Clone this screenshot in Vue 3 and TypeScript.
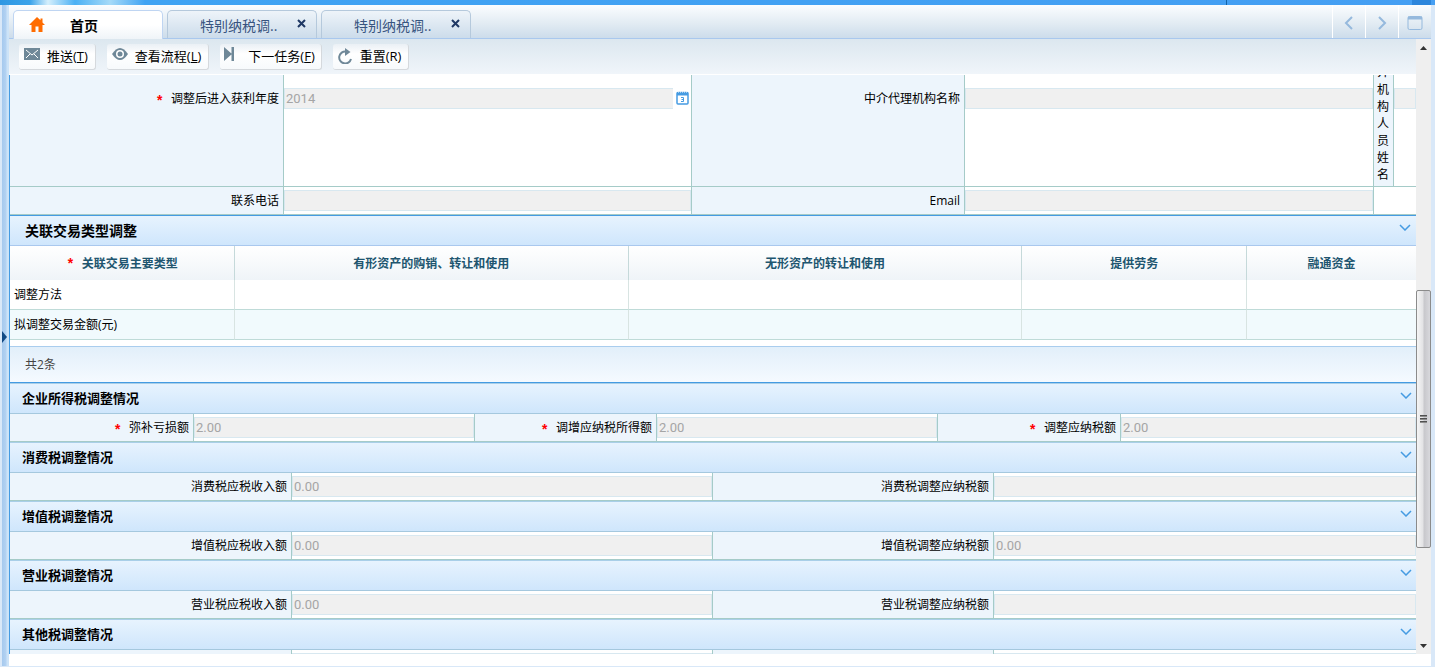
<script setup lang="ts">
interface Field {
  id: string
  label: string
  value: string
  required?: boolean
}
interface Section {
  title: string
  columns: string
  fields: Field[]
}

const tabs: string[] = ['特别纳税调..', '特别纳税调..']

const gridColumns: string[] = ['有形资产的购销、转让和使用', '无形资产的转让和使用', '提供劳务', '融通资金']
const gridRows: string[] = ['调整方法', '拟调整交易金额(元)']

const pair = (id: string, name: string, income: string, tax: string): Section => ({
  title: `${name}调整情况`,
  columns: 'two',
  fields: [
    { id: `${id}-income`, label: `${name}应税收入额`, value: income },
    { id: `${id}-tax`, label: `${name}调整应纳税额`, value: tax },
  ],
})

const sections: Section[] = [
  {
    title: '企业所得税调整情况',
    columns: 'three',
    fields: [
      { id: 'loss', label: '弥补亏损额', value: '2.00', required: true },
      { id: 'taxable', label: '调增应纳税所得额', value: '2.00', required: true },
      { id: 'payable', label: '调整应纳税额', value: '2.00', required: true },
    ],
  },
  pair('consumption', '消费税', '0.00', ''),
  pair('vat', '增值税', '0.00', '0.00'),
  pair('business', '营业税', '0.00', ''),
  pair('other', '其他税', '0.00', ''),
]
</script>

<template>
  <div class="app">
    <div class="banner"><span class="banner-mark"></span><span class="banner-end"></span></div>
    <div class="frame">
      <div class="splitter"><button class="expand" aria-label="展开"></button></div>
      <main class="main">
        <nav class="tabs">
          <button class="tab active">
            <svg class="home" viewBox="0 0 16 15"><path d="M8 0 0 8h2.500v7h4V9.500h3V15h4V8H16l-2.500-2.600V1.500h-2v1.800z" /></svg>
            <span>首页</span>
          </button>
          <div v-for="(t, i) in tabs" :key="i" class="tab">
            <button class="tab-name">{{ t }}</button>
            <button class="close" aria-label="关闭">
              <svg viewBox="0 0 9 9"><path d="M1 1l7 7M8 1L1 8" /></svg>
            </button>
          </div>
          <div class="tools">
            <button aria-label="向左"><svg viewBox="0 0 16 16"><path d="M11 2 5 8l6 6" /></svg></button>
            <button aria-label="向右"><svg viewBox="0 0 16 16"><path d="M5 2l6 6-6 6" /></svg></button>
            <button aria-label="窗口"><svg class="window" viewBox="0 0 16 16"><rect x="1" y="1.500" width="14" height="13" rx="1.500" /><path d="M1 3h14" class="thick" /></svg></button>
          </div>
        </nav>

        <div class="body">
          <div class="content">
            <div class="toolbar">
              <button class="action">
                <svg viewBox="0 0 16 16"><path class="fill" d="M0 2h16v12H0z" /><path class="light" d="M2 4l6 5 6-5M2 12l4-4M14 12l-4-4" /></svg>
                <span>推送(<u>T</u>)</span>
              </button>
              <button class="action">
                <svg viewBox="0 0 16 16"><path class="fill" d="M0 8q8-12 16 0-8 12-16 0z" /><circle class="white" cx="8" cy="8" r="4" /><circle class="fill" cx="8" cy="8" r="2.500" /></svg>
                <span>查看流程(<u>L</u>)</span>
              </button>
              <button class="action wide">
                <svg viewBox="0 0 16 16"><path class="fill" d="M1 1l8 7-8 7zM8.500 1H11v14H8.500z" /></svg>
                <span>下一任务(<u>F</u>)</span>
              </button>
              <button class="action reset">
                <svg viewBox="0 0 16 16"><path class="stroke" d="M14 11A6 6 0 1 1 9 3.500" /><path class="fill" d="M8 0l5.500 4L8 8z" /></svg>
                <span>重置(R)</span>
              </button>
            </div>

            <form class="form" @submit.prevent>
              <div class="row agency tall">
                <label class="label" for="year"><i>*</i>调整后进入获利年度</label>
                <div class="cell dated">
                  <input id="year" value="2014" disabled />
                  <button type="button" class="calendar" aria-label="选择日期">
                    <svg viewBox="0 0 13 14"><rect x="1" y="1.500" width="11" height="11.500" rx="1" fill="#fff" stroke="#459be2" stroke-width="1.500" /><path d="M1 1h11v3.500H1z" fill="#459be2" /><path d="M2 1h1M4 1h1M6 1h1M8 1h1M10 1h1" stroke="#fff" /><path d="M5 6.500h2.500v4H5M5.500 8.500h2" fill="none" stroke="#459be2" /></svg>
                  </button>
                </div>
                <label class="label" for="agency">中介代理机构名称</label>
                <div class="cell"><input id="agency" disabled /></div>
                <label class="label vertical" for="person">中介机构人员姓名</label>
                <div class="cell last"><input id="person" disabled /></div>
              </div>
              <div class="row agency contact">
                <label class="label" for="phone">联系电话</label>
                <div class="cell"><input id="phone" disabled /></div>
                <label class="label" for="email">Email</label>
                <div class="cell"><input id="email" disabled /></div>
              </div>

              <section class="panel">
                <h2 class="heading large">
                  <span>关联交易类型调整</span>
                  <button type="button" class="fold" aria-label="收起"><svg viewBox="0 0 12 7"><path d="M1 1l5 5 5-5" /></svg></button>
                </h2>
                <table class="grid">
                  <colgroup><col class="c1" /><col class="c2" /><col class="c2" /><col class="c1" /><col class="c3" /></colgroup>
                  <thead>
                    <tr>
                      <th><i>*</i>关联交易主要类型</th>
                      <th v-for="c in gridColumns" :key="c">{{ c }}</th>
                    </tr>
                  </thead>
                  <tbody>
                    <tr v-for="r in gridRows" :key="r">
                      <td>{{ r }}</td>
                      <td v-for="c in gridColumns" :key="c"></td>
                    </tr>
                  </tbody>
                </table>
                <div class="total">共2条</div>
              </section>

              <section v-for="s in sections" :key="s.title" class="section">
                <h2 class="heading">
                  <span>{{ s.title }}</span>
                  <button type="button" class="fold" aria-label="收起"><svg viewBox="0 0 12 7"><path d="M1 1l5 5 5-5" /></svg></button>
                </h2>
                <div class="row" :class="s.columns">
                  <template v-for="f in s.fields" :key="f.id">
                    <label class="label" :for="f.id"><i v-if="f.required">*</i>{{ f.label }}</label>
                    <div class="cell"><input :id="f.id" :value="f.value" disabled /></div>
                  </template>
                </div>
              </section>
            </form>
          </div>
          <div class="scrollbar">
            <button class="arrow" aria-label="向上滚动"><svg viewBox="0 0 7 4"><path d="M0 4l3.500-4L7 4z" /></svg></button>
            <div class="track"><div class="before"></div><div class="thumb"><span></span><span></span><span></span></div><div class="after"></div></div>
            <button class="arrow" aria-label="向下滚动"><svg viewBox="0 0 7 4"><path d="M0 0l3.500 4L7 0z" /></svg></button>
          </div>
        </div>
      </main>
    </div>
  </div>
</template>

<style>
body {
  margin: 0;
  overflow: hidden;
}
</style>

<style scoped>
* {
  box-sizing: border-box;
}
.app {
  height: 100vh;
  display: flex;
  flex-direction: column;
  background: #d9e8f8;
  font-family: "Open Sans", "Noto Sans CJK SC", sans-serif;
  font-size: 12px;
  color: #000;
}
button {
  border: 0;
  padding: 0;
  background: none;
  font: inherit;
  color: inherit;
}
svg {
  display: block;
}
.banner {
  height: 5px;
  display: flex;
  justify-content: flex-end;
  background: linear-gradient(90deg, #2e97e2 0, #3ba3ea 30px, #d5effc 48px, #4ab0f4 75px, #a5daf8 110px, #3fa3f3 145px, #459ff3 100%);
}
.banner-mark {
  width: 209px;
  border-left: 1px solid #1463a8;
}
.banner-end {
  width: 19px;
  margin-right: 4px;
  margin-left: -23px;
  background: #2d86dc;
}
.frame {
  flex: 1;
  min-height: 0;
  display: flex;
  padding: 0 4px 1px 2px;
}
.splitter {
  width: 7px;
  display: flex;
  align-items: center;
  background: linear-gradient(90deg, #a5c9ee 0, #b3d2f2 4px, #cce3f8 5px, #cce3f8 100%);
}
.expand {
  margin-top: 2px;
  border-left: 5px solid #124a85;
  border-top: 6px solid transparent;
  border-bottom: 6px solid transparent;
}
.main {
  flex: 1;
  min-width: 0;
  display: flex;
  flex-direction: column;
  background: #fff;
  padding-bottom: 12px;
}
.tabs {
  height: 34px;
  display: flex;
  gap: 4px;
  padding-left: 4px;
  border-bottom: 1px solid #a9c8ee;
  background: linear-gradient(#fbfdff, #e0eaf2 60%, #ccdceb);
}
.tab {
  width: 150px;
  margin-top: 5px;
  display: flex;
  align-items: center;
  border: 1px solid #b5c9dc;
  border-bottom: 0;
  border-radius: 5px 5px 0 0;
  background: linear-gradient(#eef4f9, #ccdceb);
  color: #38547f;
  font-size: 14px;
}
.tab.active {
  background: linear-gradient(#fff 50%, #eff4f8);
  border-color: #bfd5f2;
  margin-bottom: -1px;
  padding-left: 15px;
  gap: 25px;
  color: #000;
  font-weight: 700;
}
.home {
  width: 16px;
  height: 15px;
  margin-bottom: 2px;
  fill: #ff6c00;
}
.active span {
  margin-bottom: 1px;
}
.tab-name {
  flex: 1;
  padding-left: 32px;
  text-align: left;
}
.close {
  padding: 0 10px 2px 0;
}
.close svg {
  width: 9px;
  height: 9px;
  stroke: #1f3864;
  stroke-width: 2;
}
.tools {
  margin-left: auto;
  display: flex;
}
.tools button {
  width: 33px;
  display: flex;
  align-items: center;
  justify-content: center;
  border-left: 1px solid #fff;
}
.tools svg {
  width: 16px;
  height: 16px;
  margin-top: 3px;
  fill: none;
  stroke: #95b9dd;
  stroke-width: 2;
}
.tools .window {
  stroke-width: 1;
}
.tools .thick {
  stroke-width: 3;
}
.body {
  flex: 1;
  min-height: 0;
  display: flex;
}
.content {
  flex: 1;
  min-width: 0;
  display: flex;
  flex-direction: column;
}
.toolbar {
  height: 36px;
  flex: none;
  display: flex;
  align-items: flex-start;
  gap: 11px;
  padding: 5px 0 0 10px;
  border-bottom: 1px solid #fff;
  background: linear-gradient(#dce7ef, #f0f5fa);
}
.action {
  height: 26px;
  display: flex;
  align-items: center;
  gap: 7px;
  padding: 0 7px 3px 5px;
  border-right: 1px solid #d5d9dd;
  border-bottom: 1px solid #d5d9dd;
  border-radius: 3px;
  background: linear-gradient(#eaf0f5, #fff 40%, #f7fafc);
  font-size: 13px;
  white-space: nowrap;
}
.action svg {
  width: 16px;
  height: 16px;
  margin-bottom: 2px;
}
.action.wide {
  gap: 9px;
  padding-left: 3px;
  padding-right: 6px;
}
.action.reset svg {
  margin: 2px 0 0;
}
.action.reset {
  padding-left: 4px;
}
.fill {
  fill: #6f8898;
}
.white {
  fill: #fff;
}
.light {
  fill: none;
  stroke: #fff;
}
.stroke {
  fill: none;
  stroke: #6f8898;
  stroke-width: 2;
}
.form {
  flex: 1;
  min-height: 0;
  overflow: hidden;
  border-left: 1px solid #459be2;
}
.row {
  display: grid;
  border-bottom: 1px solid #a5cbc8;
}
.agency {
  grid-template-columns: 274fr 408fr 273fr 409fr 20px 22px;
}
.two {
  grid-template-columns: 282fr 421fr 281fr 422fr;
}
.three {
  grid-template-columns: 184fr 281fr 182fr 281fr 183fr 295fr;
}
.label {
  padding: 3px 4px 3px 0;
  border-right: 1px solid #a5cbc8;
  background: #edf5fc;
  line-height: 21px;
  text-align: right;
  white-space: nowrap;
}
i {
  display: inline-block;
  height: 12px;
  margin-right: 7px;
  color: #f00;
  font: 700 14px "Liberation Mono", monospace;
  line-height: 22px;
  vertical-align: top;
}
.label i {
  margin-top: 3px;
}
.cell {
  min-width: 0;
  padding: 3px 0;
  border-right: 1px solid #a5cbc8;
  background: #fff;
}
.cell:last-child {
  border-right: 0;
}
.contact .cell:last-child {
  border-right: 1px solid #a5cbc8;
}
input {
  display: block;
  width: 100%;
  height: 21px;
  padding: 0 1px;
  border: 1px solid #d8e8f0;
  border-radius: 0;
  background: #f0f0f0;
  color: #a5a5a5;
  font: 13px Roboto, sans-serif;
}
.tall {
  grid-template-rows: 111px;
  overflow: hidden;
}
.tall .label,
.tall .cell {
  padding-top: 13px;
}
.tall .vertical {
  display: flex;
  align-items: flex-end;
  padding: 0 4px 3px 3px;
  line-height: 17px;
  text-align: left;
  white-space: normal;
  word-break: break-all;
}
.dated {
  display: flex;
  align-items: flex-start;
}
.dated input {
  flex: 1;
  border-right: 0;
}
.calendar {
  padding: 3px 2px 0 3px;
}
.calendar svg {
  width: 13px;
  height: 14px;
}
.panel {
  border-top: 1px solid #459be2;
  border-bottom: 1px solid #459be2;
}
.heading {
  height: 31px;
  margin: 0;
  display: flex;
  justify-content: space-between;
  padding: 0 4px 0 12px;
  border-top: 1px solid #a9cfe8;
  border-bottom: 1px solid #a5c8de;
  background: linear-gradient(#e7f3fe, #cfe6fc);
  font-size: 13px;
  line-height: 28px;
}
.heading.large {
  height: 30px;
  padding: 0 5px 0 15px;
  border-top: 0;
  border-bottom-color: #a9c8ee;
  font-size: 14px;
  line-height: 30px;
}
.fold {
  align-self: flex-start;
  padding-top: 8px;
}
.fold svg {
  width: 12px;
  height: 7px;
  fill: none;
  stroke: #459be2;
  stroke-width: 1.5;
}
.grid {
  width: 100%;
  table-layout: fixed;
  border-collapse: separate;
  border-spacing: 0;
}
.c1 {
  width: 16%;
}
.c2 {
  width: 28%;
}
.c3 {
  width: 12%;
}
th {
  height: 34px;
  padding: 0;
  border-right: 1px solid #c5d9da;
  background: linear-gradient(#fff, #eff4f8);
  color: #20556f;
  font-weight: 700;
}
td {
  height: 30px;
  padding: 0 4px 1px;
  border-right: 1px solid #d8e4e2;
  border-bottom: 1px solid #bfdbd8;
}
th:last-child,
td:last-child {
  border-right: 0;
}
tbody tr:nth-child(2) {
  background: #f1fafd;
}
.total {
  height: 36px;
  margin-top: 6px;
  padding-left: 15px;
  border-top: 1px solid #a9cdee;
  background: linear-gradient(#e2effa, #f5faff);
  color: #444;
  line-height: 35px;
}
.scrollbar {
  width: 15px;
  display: flex;
  flex-direction: column;
  background: #efefef;
}
.arrow {
  height: 17px;
  display: flex;
  align-items: center;
  justify-content: center;
}
.arrow svg {
  width: 7px;
  height: 4px;
  fill: #333;
}
.track {
  flex: 1;
  display: flex;
  flex-direction: column;
}
.before {
  flex: 235;
}
.after {
  flex: 89;
}
.thumb {
  flex: 257;
  display: flex;
  flex-direction: column;
  align-items: center;
  justify-content: center;
  gap: 1px;
  border: 1px solid #8b8b8b;
  border-radius: 2px;
  background: linear-gradient(90deg, #f5f5f5, #e3e3e5 45%, #c8c8cc 55%, #d8d8dc);
}
.thumb span {
  width: 7px;
  height: 2px;
  background: linear-gradient(#333, #aaa);
}
</style>
